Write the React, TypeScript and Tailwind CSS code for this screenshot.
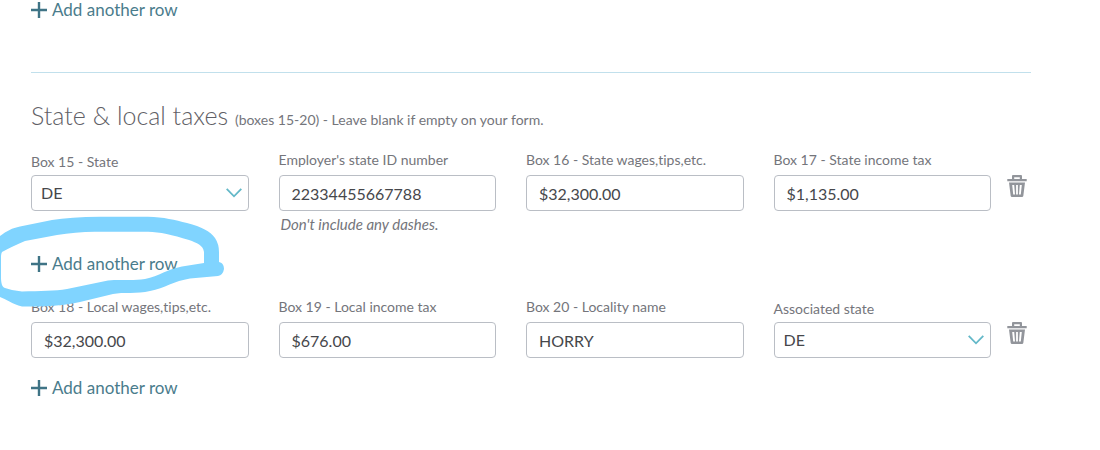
import React, { useState } from 'react';

const labelClass = 'block text-sm leading-5 text-[#74757b] whitespace-nowrap';
const inputClass =
  'block w-full h-9 px-3 text-base text-[#46474b] bg-white border border-[#babec5] rounded focus:outline-none focus:border-[#4a7c8c]';

function AddRowButton() {
  return (
    <button type="button" className="flex items-center gap-1 h-5 text-[17px] text-[#4a7c8c] cursor-pointer">
      <svg viewBox="0 0 17 17" className="w-[17px] h-[17px]" aria-hidden="true">
        <path d="M8 0v16M0 8h16" stroke="#3f7486" strokeWidth="2.4" fill="none" />
      </svg>
      Add another row
    </button>
  );
}

function TextField({ id, label, initial, hint }: { id: string; label: string; initial: string; hint?: string }) {
  const [value, setValue] = useState(initial);

  return (
    <div className="flex-1 min-w-0">
      <label htmlFor={id} className={`mb-[5px] ${labelClass}`}>
        {label}
      </label>
      <input id={id} type="text" value={value} onChange={(e) => setValue(e.target.value)} className={inputClass} />
      {hint && <p className="mt-[3px] pl-0.5 text-[15px] leading-5 italic text-[#74757b]">{hint}</p>}
    </div>
  );
}

function StateSelect({ id, label }: { id: string; label: string }) {
  const [value, setValue] = useState('DE');

  return (
    <div className="flex-1 min-w-0">
      <label htmlFor={id} className={`pt-0.5 mb-[3px] ${labelClass}`}>
        {label}
      </label>
      <div className="relative">
        <select
          id={id}
          value={value}
          onChange={(e) => setValue(e.target.value)}
          className="block w-full h-9 px-[9px] text-base text-[#46474b] bg-white border border-[#babec5] rounded appearance-none focus:outline-none"
        >
          <option>DE</option>
          <option>SC</option>
        </select>
        <svg
          viewBox="0 0 16 10"
          className="absolute right-[7px] top-[13px] w-4 h-2.5 pointer-events-none"
          aria-hidden="true"
        >
          <path d="M0.7 0.8L8 8.3L15.3 0.8" stroke="#63b8c8" strokeWidth="1.8" fill="none" />
        </svg>
      </div>
    </div>
  );
}

function DeleteButton({ label }: { label: string }) {
  return (
    <button type="button" aria-label={label} className="w-5 mt-[25px] -ml-3.5 mr-1 text-[#92959b] cursor-pointer">
      <svg viewBox="0 0 20 22" className="w-5 h-[22px]" aria-hidden="true">
        <path d="M5 4V1Q5 0 6 0H14Q15 0 15 1V4H19.7V6.2H0.3V4ZM7.2 2.2V4H12.8V2.2Z" fill="currentColor" fillRule="evenodd" />
        <path
          d="M2 7.4H18L16.3 21Q16.1 22 15 22H5Q3.9 22 3.7 21ZM5.2 10L6.2 19.4H8L7.2 10ZM9.1 10V19.4H10.9V10ZM12.8 10L12 19.4H13.8L14.8 10Z"
          fill="currentColor"
          fillRule="evenodd"
        />
      </svg>
    </button>
  );
}

// Hand-drawn highlight around the middle "Add another row" button
function MarkerCircle() {
  return (
    <svg
      viewBox="0 210 230 100"
      className="absolute -left-[31px] -top-11 w-[230px] h-[100px] pointer-events-none"
      aria-hidden="true"
    >
      <path
        fill="#80d4ff"
        fillRule="evenodd"
        d="M0 236C7 231 12 228 20 226.500L52 220Q70 217 100 216.700H148C164 217 175 220 187 223C202 227 210 231 215 238Q219 244 219 252V262C223 263 224 266 224 269Q223 275 218 276L190 278.500C174 281 165 288 150 291C137 294 123 292 113 294L80 302C60 306 45 307 22 306.500C12 304 6 299 0 297Z
        M2 252Q1 254 1 257V277C1 283 2 287 5 288Q13 291 22 291.500C40 291 55 291 67 289L108 280.500C120 279 132 281 145 279C159 276 168 269 182 266.500L204 263V252C203 245 197 243 189 240C172 235 160 232 148 231.800H95Q75 232 57 235L25 241Q11 247 2 252Z"
      />
    </svg>
  );
}

function App() {
  return (
    <main className="min-h-screen bg-white pl-[31px] pr-[69px] pb-12 font-['Lato',sans-serif] [font-variant-ligatures:none]">
      <AddRowButton />

      <hr className="mt-[52px] border-[#c1e0ec]" />

      <section>
        <h2 className="mt-[26px] text-[25px] leading-8 font-light text-[#5f6066]">
          State &amp; local taxes{' '}
          <span className="text-sm font-normal text-[#74757b]">
            (boxes 15-20) - Leave blank if empty on your form.
          </span>
        </h2>

        <div className="flex items-start gap-[30px] mt-[19px]">
          <StateSelect id="box15" label="Box 15 - State" />
          <TextField
            id="state-id"
            label="Employer's state ID number"
            initial="22334455667788"
            hint="Don't include any dashes."
          />
          <TextField id="box16" label="Box 16 - State wages,tips,etc." initial="$32,300.00" />
          <TextField id="box17" label="Box 17 - State income tax" initial="$1,135.00" />
          <DeleteButton label="Delete state row" />
        </div>

        <div className="relative z-10 mt-5">
          <AddRowButton />
          <MarkerCircle />
        </div>

        <div className="flex items-start gap-[30px] mt-[23px]">
          <TextField id="box18" label="Box 18 - Local wages,tips,etc." initial="$32,300.00" />
          <TextField id="box19" label="Box 19 - Local income tax" initial="$676.00" />
          <TextField id="box20" label="Box 20 - Locality name" initial="HORRY" />
          <StateSelect id="associated-state" label="Associated state" />
          <DeleteButton label="Delete local row" />
        </div>

        <div className="mt-5">
          <AddRowButton />
        </div>
      </section>
    </main>
  );
}

export default App;
